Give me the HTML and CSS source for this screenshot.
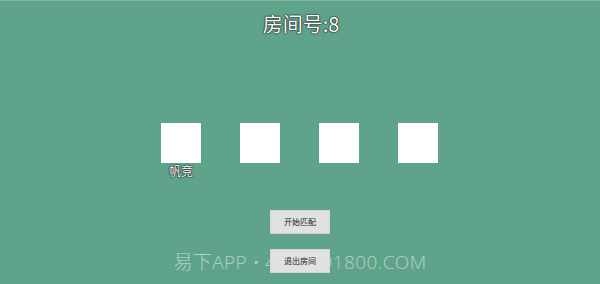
FILE: index.html
```html
<!DOCTYPE html>
<html lang="zh">
<head>
<meta charset="utf-8">
<link rel="stylesheet" href="styles.css">
</head>
<body>
<div class="page">
  <h1 class="title">房间号:8</h1>
  <div class="seats">
    <div class="seat"><div class="avatar"></div><div class="name">帆竞</div></div>
    <div class="seat"><div class="avatar"></div></div>
    <div class="seat"><div class="avatar"></div></div>
    <div class="seat"><div class="avatar"></div></div>
  </div>
  <div class="actions">
    <button class="btn">开始匹配</button>
    <button class="btn">退出房间</button>
  </div>
  <div class="watermark">易下APP • 4008891800.COM</div>
</div>
</body>
</html>
```

FILE: styles.css
```css
html, body {
  margin: 0;
  padding: 0;
}
body {
  width: 600px;
  height: 284px;
  overflow: hidden;
  background: #5fa38a;
  font-family: "Noto Sans CJK SC", "Liberation Sans", sans-serif;
}
.page {
  position: relative;
  height: 284px;
  display: flex;
  flex-direction: column;
  align-items: center;
  border-top: 1px solid #7db6a2;
  box-sizing: border-box;
}
.title {
  margin: 11px 0 0;
  font-size: 20px;
  line-height: 24px;
  font-weight: normal;
  color: #ffffff;
  text-shadow: 0 0 1px #111, 0 0 1px #111, 0 0 2px #333;
  padding-left: 2px;
}
.seats {
  margin-top: 87px;
  margin-right: 1px;
  display: flex;
  gap: 39px;
  height: 55px;
}
.seat {
  width: 40px;
  display: flex;
  flex-direction: column;
  align-items: center;
}
.avatar {
  width: 40px;
  height: 40px;
  background: #ffffff;
}
.name {
  margin-top: 1px;
  font-size: 12px;
  line-height: 14px;
  color: #ffffff;
  text-shadow: 0 0 1px #111, 0 0 1px #111, 0 0 2px #333;
}
.actions {
  margin-top: 32px;
  display: flex;
  flex-direction: column;
  gap: 15px;
  position: relative;
  z-index: 1;
}
.btn {
  width: 60px;
  height: 24px;
  padding: 0;
  margin: 0;
  border: 1px solid #d4d4d4;
  background: #e1e1e1;
  color: #222;
  font-family: "Noto Sans CJK SC", "Liberation Sans", sans-serif;
  font-size: 8px;
  line-height: 22px;
}
.watermark {
  position: absolute;
  left: 0;
  right: 0;
  top: 248px;
  text-align: center;
  font-family: "Open Sans", "Noto Sans CJK SC", sans-serif;
  font-weight: 300;
  font-size: 19px;
  letter-spacing: 0.4px;
  line-height: 26px;
  color: rgba(255, 255, 255, 0.5);
  white-space: nowrap;
}
```
